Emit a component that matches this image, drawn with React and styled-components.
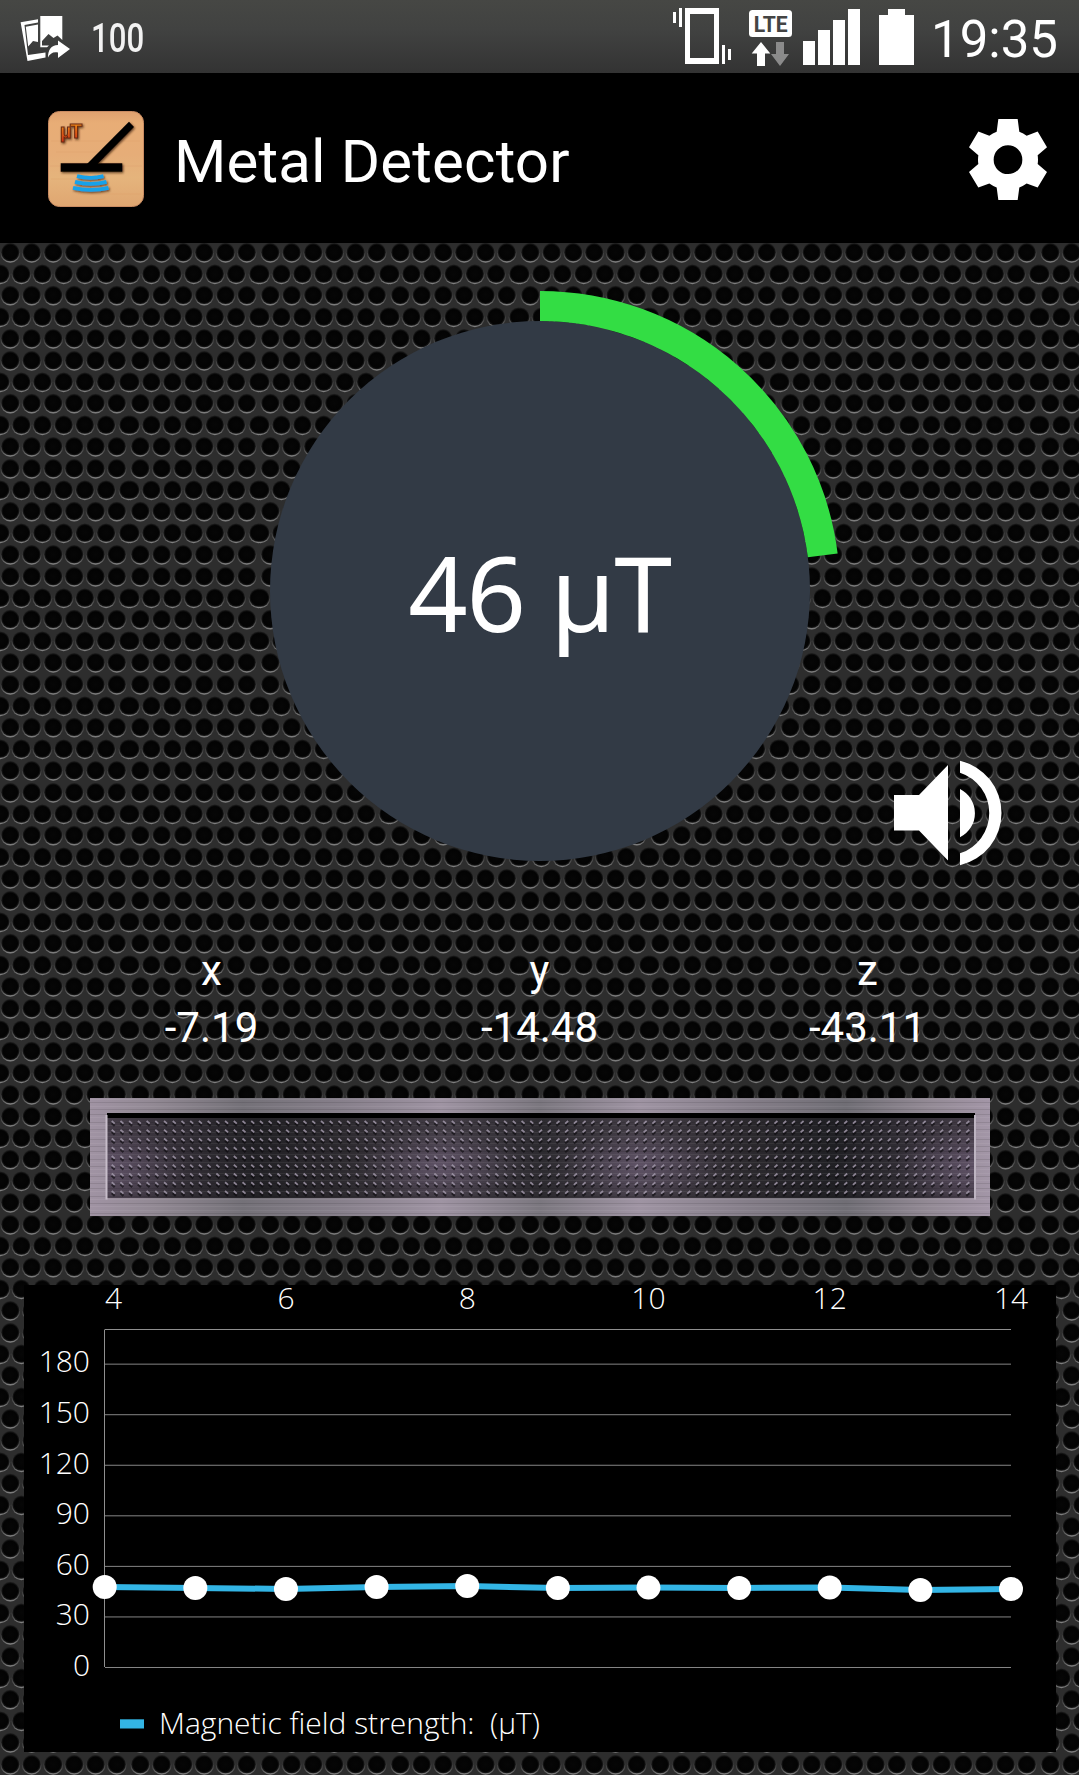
import React, { useState } from "react";
import styled, { createGlobalStyle } from "styled-components";

const GlobalStyle = createGlobalStyle`
  * { box-sizing: border-box; }
  body {
    margin: 0;
    background: #000;
    color: #fff;
    font-family: Roboto, "Liberation Sans", sans-serif;
  }
`;

const StyledScreen = styled.div`
  display: flex;
  flex-direction: column;
  width: 1079px;
  height: 1775px;
  overflow: hidden;
`;

const StyledStatusBar = styled.div`
  display: flex;
  align-items: flex-start;
  justify-content: space-between;
  height: 73px;
  background: linear-gradient(#464744 0%, #414241 40%, #333 100%);
`;

const StyledStatusGroup = styled.div`
  display: flex;
  height: 73px;
  padding: ${({ $pad }) => $pad || "0"};
`;

const StyledBadge = styled.span`
  margin-left: 19px;
  font-size: 41px;
  font-weight: 500;
  line-height: 77px;
  color: #f2f2f2;
  transform: scaleX(0.76);
  transform-origin: left;
`;

const StyledClock = styled.span`
  width: 128px;
  margin-left: 16px;
  font-size: 51px;
  line-height: 80px;
  white-space: nowrap;
`;

const StyledHeader = styled.header`
  display: flex;
  align-items: center;
  height: 170px;
  padding: 2px 32px 0 48px;
  background: #000;
`;

const StyledTitle = styled.h1`
  flex: 1;
  margin: 6px 0 0 30px;
  font-size: 60px;
  font-weight: 400;
  line-height: 72px;
  letter-spacing: 0.15px;
`;

const StyledButton = styled.button`
  display: block;
  padding: 0;
  border: 0;
  background: none;
  line-height: 0;
  cursor: pointer;
`;

const StyledMain = styled.main`
  position: relative;
  flex: 1;
  display: flex;
  flex-direction: column;
`;

const StyledMesh = styled.svg`
  position: absolute;
  inset: 0;
  width: 100%;
  height: 100%;
`;

const StyledGaugeArea = styled.section`
  position: relative;
  display: flex;
  justify-content: center;
  height: 648px;
  padding-top: 47px;
`;

const StyledGauge = styled.div`
  position: relative;
  display: grid;
  place-items: center;
  width: 602px;
  height: 602px;
`;

const StyledDial = styled.svg`
  grid-area: 1 / 1;
`;

const StyledReading = styled.span`
  grid-area: 1 / 1;
  z-index: 1;
  margin-top: 2px;
  font-family: "Noto Sans", "Open Sans", sans-serif;
  font-size: 104px;
  line-height: 140px;
  letter-spacing: -1.2px;
  white-space: nowrap;
`;

const StyledSound = styled(StyledButton)`
  position: absolute;
  right: 76px;
  bottom: 25px;
`;

const StyledAxes = styled.section`
  position: relative;
  display: grid;
  grid-template-columns: repeat(3, 328px);
  justify-content: center;
  height: 207px;
  padding-top: 51px;
  text-align: center;
`;

const StyledAxis = styled.div`
  font-size: 42px;
  line-height: 57px;
`;

const StyledPlate = styled.svg`
  position: relative;
  display: block;
  flex: none;
  margin: 0 0 0 90px;
`;

const StyledChart = styled.section`
  position: relative;
  width: 1032px;
  height: 467px;
  margin: 69px 0 0 24px;
  background: #000;
`;

const StyledChartSvg = styled.svg`
  display: block;
  overflow: visible;
  font-family: "Open Sans", sans-serif;
  font-weight: 300;
  font-size: 30px;
  fill: #fff;
`;

const reading = { value: 46, max: 200, x: "-7.19", y: "-14.48", z: "-43.11" };

const samples = [47.8, 47.2, 46.6, 47.8, 48.3, 47.2, 47.4, 47.2, 47.5, 46, 46.6];

// x centres of the holes in one mesh tile
const evenRow = [10.3, 31.7, 53.2, 74.2, 95.6, 116.8];
const oddRow = [0.4, 21.4, 42.4, 63.7, 84.9, 106.1, 128.4];
const meshRows = [
    [9.5, evenRow],
    [31, oddRow],
    [52.3, evenRow],
    [74, oddRow],
    [95.5, evenRow],
];

const Mesh = () => (
    <StyledMesh>
        <defs>
            <linearGradient id="rim" x1="0" y1="0" x2="0" y2="1">
                <stop offset="0" stopColor="#222" />
                <stop offset="0.4" stopColor="#333" />
                <stop offset="0.75" stopColor="#525252" />
                <stop offset="1" stopColor="#868686" />
            </linearGradient>
            <radialGradient id="hole">
                <stop offset="0" stopColor="#060606" />
                <stop offset="0.8" stopColor="#030303" />
                <stop offset="1" stopColor="#1c1c1c" />
            </radialGradient>
            <pattern id="mesh" width="130" height="108" patternUnits="userSpaceOnUse">
                <rect width="130" height="108" fill="#2d2d2d" />
                {meshRows.map(([y, row]) => row.map((x) => (
                    <g key={`${x}-${y}`}>
                        <circle cx={x} cy={y + 0.3} r="9.9" fill="url(#rim)" />
                        <circle cx={x} cy={y - 0.2} r="9" fill="url(#hole)" />
                    </g>
                )))}
            </pattern>
        </defs>
        <rect width="100%" height="100%" fill="url(#mesh)" />
    </StyledMesh>
);

const ShareIcon = () => (
    <svg width="52" height="73" viewBox="20 0 52 73" fill="#fff">
        <path d="M20.6 22.2L38 19.3V22.6L24.5 25L28 55L45.5 52.5V57.5L27.5 61Z" />
        <path d="M25.8 26.8L38 24.5V42L33 41L28.2 46.5Z" />
        <path d="M40.3 16H62.3V40L57.5 35.5L53.5 38L48.5 34L41.6 41.5H40.3Z" />
        <path d="M40.3 41.5L42 40.5V45.5H49L47 47.3H40.3Z" />
        <path d="M58 40.5L70 49L58 58V52.5C53 51.5 50 53.5 48 57.5C48 50 51 45 58 45Z" />
    </svg>
);

const VibrateIcon = () => (
    <svg width="60" height="73" viewBox="673 0 60 73" fill="#fff">
        <path d="M686 8H720V64H686ZM691 14V58H715V14Z" fillRule="evenodd" />
        <path d="M674 12H677V23H674ZM680 8H683V27H680ZM723 45H726V64H723ZM729 49H732V60H729Z" />
    </svg>
);

const LteIcon = () => (
    <svg width="45" height="73" viewBox="749 0 45 73">
        <rect x="750" y="10" width="43" height="27" rx="3.5" fill="#fff" />
        <text x="771.7" y="32" textAnchor="middle" fontSize="22" fontWeight="700" fill="#444" textLength="34" lengthAdjust="spacingAndGlyphs">LTE</text>
        <path d="M762 42L771.3 53.5H766V66H758V53.5H752.7Z" fill="#fff" />
        <path d="M777 42H785V54H790L781 66L772 54H777Z" fill="#8b8b8b" />
    </svg>
);

const SignalIcon = () => (
    <svg width="59" height="73" viewBox="803 0 59 73" fill="#fff">
        <path d="M804 41H816V65H804ZM819 30H831V65H819ZM834 20H846V65H834ZM849 9H861V65H849Z" />
    </svg>
);

const BatteryIcon = () => (
    <svg width="37" height="73" viewBox="879 0 37 73" fill="#fff">
        <path d="M889 9H906V15H915V65H880V15H889Z" />
    </svg>
);

const AppIcon = () => (
    <svg width="96" height="96" viewBox="0 0 96 96">
        <defs>
            <linearGradient id="wood" x1="0" y1="0" x2="0" y2="1">
                <stop offset="0" stopColor="#dfa16f" />
                <stop offset="0.12" stopColor="#e8ad76" />
                <stop offset="0.45" stopColor="#e6ad78" />
                <stop offset="0.7" stopColor="#e5b47c" />
                <stop offset="1" stopColor="#dfa671" />
            </linearGradient>
            <linearGradient id="fire" x1="0" y1="0" x2="0" y2="1">
                <stop offset="0" stopColor="#f3a01c" />
                <stop offset="1" stopColor="#cf2e12" />
            </linearGradient>
            <filter id="drop" x="-20%" y="-20%" width="150%" height="150%">
                <feDropShadow dx="1" dy="1.2" stdDeviation="0.8" floodColor="#3a2410" floodOpacity="0.8" />
            </filter>
        </defs>
        <rect x="0.5" y="0.5" width="95" height="95" rx="11" fill="url(#wood)" stroke="#c98b62" />
        <path d="M3 30H92M2 55H94M3 68H60M30 83H93M8 41H50" stroke="#d99b68" strokeOpacity="0.35" />
        <g filter="url(#drop)">
            <path d="M81 10.7L86 16L49.5 53H39Z" />
            <path d="M12.7 52.3H74.3V60.7H12.7Z" />
            <path d="M29 65.2Q42.5 68.6 55.5 65.2M27 70.8Q43 74.8 58.5 70.8M25 76.8Q43 81 60.5 76.8" fill="none" stroke="#17a2ea" strokeWidth="3.8" />
            <g fontFamily="Liberation Sans" fontWeight="700" fill="url(#fire)" stroke="#6b2a12" strokeWidth="1">
                <text x="12" y="27" fontSize="20">µ</text>
                <text x="22" y="26.5" fontSize="20">T</text>
            </g>
        </g>
    </svg>
);

const GearIcon = () => (
    <svg width="78" height="81" viewBox="0 0 234 241" preserveAspectRatio="none" fill="#fff">
        <path fillRule="evenodd" d="M88 0H146L151 38Q163 43 173 50L206 37L234 84L206 108Q208 121 206 134L234 158L206 204L173 192Q163 199 151 204L146 241H88L83 204Q71 199 61 192L28 204L0 158L28 134Q26 121 28 108L0 84L28 37L61 50Q71 43 83 38ZM117 78A43 43 0 1 0 117 164A43 43 0 1 0 117 78Z" />
    </svg>
);

const SpeakerIcon = ({ muted }) => (
    <svg width="109" height="106" viewBox="0 0 109 106" fill="#fff">
        <path d="M0 35H25L54 5V100.5L25 70.5H0Z" />
        {!muted && <path d="M66 29A27 27 0 0 1 66 77.3ZM66 .7A53.7 53.7 0 0 1 66 105.3V93.3A42.4 42.4 0 0 0 66 12.7Z" />}
    </svg>
);

const Gauge = ({ value, max }) => {
    const angle = (value / max) * 2 * Math.PI;
    const x = 301 + 285 * Math.sin(angle);
    const y = 301 - 285 * Math.cos(angle);
    return (
        <StyledGauge>
            <StyledDial width="602" height="602">
                <circle cx="301" cy="301" r="270" fill="#323a45" />
                <path d={`M301 16A285 285 0 0 1 ${x} ${y}`} fill="none" stroke="#33dd44" strokeWidth="30" />
            </StyledDial>
            <StyledReading>{value} µT</StyledReading>
        </StyledGauge>
    );
};

const Plate = () => {
    const dots = [];
    for (let row = 0; row < 9; row++) {
        for (let col = -49; col <= 49; col++) {
            const x = 450.5 + col * 8.72;
            const y = 24.3 + row * 8.75;
            const dir = col < 0 ? 1 : -1;
            dots.push(`M${x - 1.5 * dir} ${y - 1.3}l${3 * dir} 2.6`);
        }
    }
    return (
        <StyledPlate width="900" height="118">
            <defs>
                <linearGradient id="steel">
                    <stop offset="0" stopColor="#a093a3" />
                    <stop offset="0.07" stopColor="#928994" />
                    <stop offset="0.17" stopColor="#747178" />
                    <stop offset="0.27" stopColor="#857e89" />
                    <stop offset="0.39" stopColor="#9f94a3" />
                    <stop offset="0.5" stopColor="#7b777f" />
                    <stop offset="0.61" stopColor="#9f94a3" />
                    <stop offset="0.73" stopColor="#857e89" />
                    <stop offset="0.84" stopColor="#706e75" />
                    <stop offset="0.93" stopColor="#928994" />
                    <stop offset="1" stopColor="#a396a7" />
                </linearGradient>
                <linearGradient id="well">
                    <stop offset="0" stopColor="#443c47" />
                    <stop offset="0.17" stopColor="#222125" />
                    <stop offset="0.27" stopColor="#2d2a2f" />
                    <stop offset="0.39" stopColor="#433d46" />
                    <stop offset="0.5" stopColor="#2d2b30" />
                    <stop offset="0.61" stopColor="#433d46" />
                    <stop offset="0.73" stopColor="#2d2a2f" />
                    <stop offset="0.84" stopColor="#202024" />
                    <stop offset="1" stopColor="#443c47" />
                </linearGradient>
                <radialGradient id="glow">
                    <stop offset="0" stopColor="#7b6886" stopOpacity="0.5" />
                    <stop offset="1" stopColor="#7b6886" stopOpacity="0" />
                </radialGradient>
                <pattern id="brushed" width="900" height="37" patternUnits="userSpaceOnUse">
                    <path d="M0 1.5H900M0 8.5H900M0 19.5H900M0 27.5H900M0 34.5H900" stroke="#fff" strokeOpacity="0.06" />
                    <path d="M0 4.5H900M0 11.5H900M0 16.5H900M0 24.5H900M0 31.5H900" stroke="#000" strokeOpacity="0.1" />
                </pattern>
                <clipPath id="wellClip"><path d="M17 15H885V100H17Z" /></clipPath>
            </defs>
            <rect width="900" height="118" fill="url(#steel)" />
            <rect width="900" height="118" fill="url(#brushed)" />
            <g clipPath="url(#wellClip)">
                <rect x="17" y="15" width="868" height="85" fill="url(#well)" />
                <ellipse cx="17" cy="70" rx="80" ry="40" fill="url(#glow)" />
                <ellipse cx="350" cy="68" rx="80" ry="36" fill="url(#glow)" />
                <ellipse cx="551" cy="68" rx="80" ry="36" fill="url(#glow)" />
                <ellipse cx="885" cy="68" rx="80" ry="40" fill="url(#glow)" />
                <rect x="17" y="15" width="868" height="85" fill="url(#brushed)" />
                <path d={dots.join("")} transform="translate(0 2.2)" stroke="#08070a" strokeOpacity="0.6" strokeWidth="2.2" />
                <path d={dots.join("")} stroke="#a096a8" strokeOpacity="0.85" strokeWidth="1.8" />
                <rect x="17" y="15" width="868" height="5" fill="#000" />
            </g>
            <path d="M16.5 17V101.5" stroke="#c6bcc9" strokeWidth="2" />
            <path d="M885 17V101.5" stroke="#bdb4c1" strokeWidth="2" />
        </StyledPlate>
    );
};

const Chart = () => {
    const levels = [180, 150, 120, 90, 60, 30, 0];
    const hours = [4, 6, 8, 10, 12, 14];
    const toX = (i) => 80.7 + i * 90.63;
    const toY = (v) => 382.5 - v * 1.6853;
    return (
        <StyledChart>
            <StyledChartSvg width="1032" height="467">
                {hours.map((hour, i) => (
                    <text key={hour} x={i === 0 ? 89.5 : toX(i * 2)} y="23.9" textAnchor="middle">{hour}</text>
                ))}
                <path d="M80.5 44.5H987M80.5 45V382" stroke="#8f8f8f" fill="none" />
                {levels.map((level) => (
                    <g key={level}>
                        <path d={`M81 ${toY(level)}H987`} stroke="#858585" />
                        <text x="66" y={toY(level) + 8.3} textAnchor="end">{level}</text>
                    </g>
                ))}
                <polyline
                    points={samples.map((v, i) => `${toX(i)},${toY(v)}`).join(" ")}
                    fill="none"
                    stroke="#33b5e5"
                    strokeWidth="6"
                />
                {samples.map((v, i) => (
                    <circle key={i} cx={toX(i)} cy={toY(v)} r="12" />
                ))}
                <rect x="96" y="434.3" width="24" height="9.2" fill="#33b5e5" />
                <text x="135" y="448.5" xmlSpace="preserve">Magnetic field strength:  (µT)</text>
            </StyledChartSvg>
        </StyledChart>
    );
};

const App = () => {
    const [isMuted, setIsMuted] = useState(false);

    const handleSound = () => {
        setIsMuted(!isMuted);
    };

    return (
        <StyledScreen>
            <GlobalStyle />
            <StyledStatusBar>
                <StyledStatusGroup $pad="0 0 0 20px">
                    <ShareIcon />
                    <StyledBadge>100</StyledBadge>
                </StyledStatusGroup>
                <StyledStatusGroup $pad="0 20px 0 0">
                    <VibrateIcon />
                    <StyledStatusGroup $pad="0 9px 0 16px"><LteIcon /></StyledStatusGroup>
                    <SignalIcon />
                    <StyledStatusGroup $pad="0 0 0 17px"><BatteryIcon /></StyledStatusGroup>
                    <StyledClock>19:35</StyledClock>
                </StyledStatusGroup>
            </StyledStatusBar>
            <StyledHeader>
                <AppIcon />
                <StyledTitle>Metal Detector</StyledTitle>
                <StyledButton aria-label="Settings"><GearIcon /></StyledButton>
            </StyledHeader>
            <StyledMain>
                <Mesh />
                <StyledGaugeArea>
                    <Gauge value={reading.value} max={reading.max} />
                    <StyledSound aria-label="Sound" onClick={handleSound}>
                        <SpeakerIcon muted={isMuted} />
                    </StyledSound>
                </StyledGaugeArea>
                <StyledAxes>
                    {["x", "y", "z"].map((axis) => (
                        <StyledAxis key={axis}>
                            <div>{axis}</div>
                            <div>{reading[axis]}</div>
                        </StyledAxis>
                    ))}
                </StyledAxes>
                <Plate />
                <Chart />
            </StyledMain>
        </StyledScreen>
    );
};

export default App;
